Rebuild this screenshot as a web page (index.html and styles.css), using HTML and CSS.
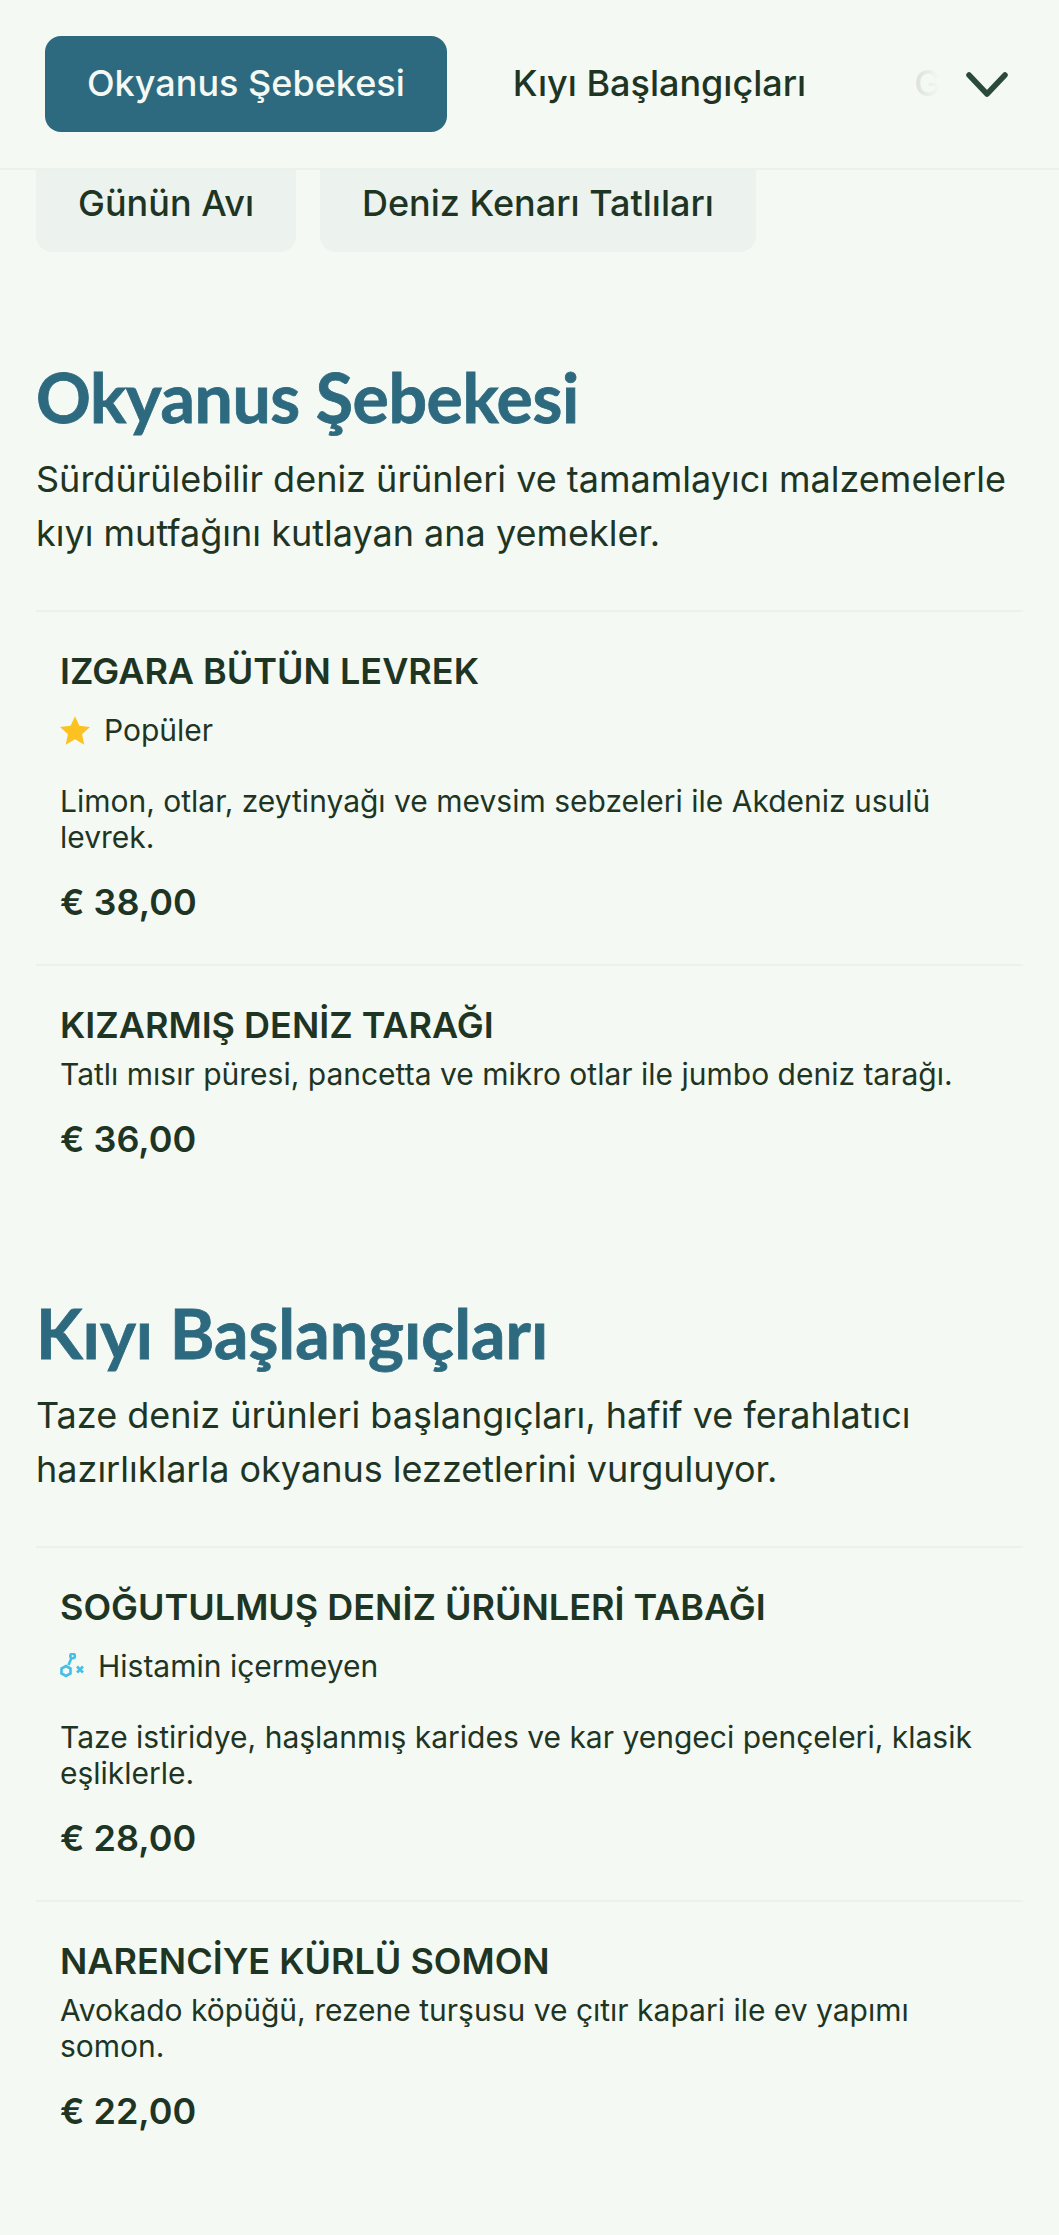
FILE: index.html
```html
<!DOCTYPE html>
<html lang="tr">
<head>
    <meta charset="UTF-8">
    <meta name="viewport" content="width=device-width, initial-scale=1.0">
    <title>Menü</title>
    <link rel="stylesheet" href="styles.css">
</head>
<body>
    <header class="topbar">
        <nav class="tabs">
            <a class="tab active">Okyanus Şebekesi</a>
            <a class="tab">Kıyı Başlangıçları</a>
            <a class="tab">Günün Avı</a>
        </nav>
        <div class="fade"></div>
        <svg class="chevron" viewBox="0 0 42 26" width="42" height="26">
            <path d="M3 3 L21 22 L39 3" fill="none" stroke="#2b4a3a" stroke-width="5.5" stroke-linecap="round" stroke-linejoin="round"/>
        </svg>
    </header>
    <div class="chips">
        <a class="chip">Günün Avı</a>
        <a class="chip">Deniz Kenarı Tatlıları</a>
    </div>

    <section class="section">
        <h2 class="title-main">Okyanus Şebekesi</h2>
        <p class="lead">Sürdürülebilir deniz ürünleri ve tamamlayıcı malzemelerle kıyı mutfağını kutlayan ana yemekler.</p>
        <div class="items">
            <article class="item">
                <h3>Izgara Bütün Levrek</h3>
                <div class="badge">
                    <svg viewBox="1 1.5 22 21" width="30" height="29"><path d="M12 1.5 L15.2 8.6 L23 9.5 L17.2 14.7 L18.8 22.4 L12 18.5 L5.2 22.4 L6.8 14.7 L1 9.5 L8.8 8.6 Z" fill="#fbc221"/></svg>
                    <span>Popüler</span>
                </div>
                <p class="desc">Limon, otlar, zeytinyağı ve mevsim sebzeleri ile Akdeniz usulü levrek.</p>
                <div class="price">€ 38,00</div>
            </article>
            <article class="item">
                <h3>Kızarmış Deniz Tarağı</h3>
                <p class="desc">Tatlı mısır püresi, pancetta ve mikro otlar ile jumbo deniz tarağı.</p>
                <div class="price">€ 36,00</div>
            </article>
        </div>
    </section>

    <section class="section">
        <h2>Kıyı Başlangıçları</h2>
        <p class="lead">Taze deniz ürünleri başlangıçları, hafif ve ferahlatıcı hazırlıklarla okyanus lezzetlerini vurguluyor.</p>
        <div class="items">
            <article class="item">
                <h3>Soğutulmuş Deniz Ürünleri Tabağı</h3>
                <div class="badge">
                    <svg viewBox="0 0 24 26" width="24" height="26" fill="none" stroke="#45bfe6" stroke-width="2.6">
                        <circle cx="12.6" cy="3" r="2.3"/>
                        <path d="M11.5 5 L8.5 12"/>
                        <path d="M6 13 L10.5 15.5 L10.5 20.5 L6 23 L1.5 20.5 L1.5 15.5 Z"/>
                        <path d="M17 13.5 L23 19.5 M23 13.5 L17 19.5"/>
                    </svg>
                    <span>Histamin içermeyen</span>
                </div>
                <p class="desc">Taze istiridye, haşlanmış karides ve kar yengeci pençeleri, klasik eşliklerle.</p>
                <div class="price">€ 28,00</div>
            </article>
            <article class="item">
                <h3>Narenciye Kürlü Somon</h3>
                <p class="desc">Avokado köpüğü, rezene turşusu ve çıtır kapari ile ev yapımı somon.</p>
                <div class="price">€ 22,00</div>
            </article>
        </div>
    </section>
</body>
</html>
```

FILE: styles.css
```css
*{
    margin: 0;
    padding: 0;
    box-sizing: border-box;
}
body{
    width: 1059px;
    height: 2235px;
    overflow: hidden;
    background-color: #f4f9f4;
    color: #1f3524;
    font-family: "Inter", "Liberation Sans", sans-serif;
}
.topbar{
    position: relative;
    z-index: 2;
    display: flex;
    align-items: center;
    height: 170px;
    padding: 0 45px;
    background-color: #f4f9f4;
    border-bottom: 2px solid #ecf1ec;
}
.tabs{
    display: flex;
    gap: 24px;
    width: 900px;
    overflow: hidden;
}
.tab{
    flex: none;
    height: 96px;
    line-height: 94px;
    padding: 0 42px;
    border-radius: 16px;
    font-size: 36px;
    font-weight: 500;
    white-space: nowrap;
}
.tab.active{
    background-color: #2e6a7f;
    color: #f4f9f4;
}
.fade{
    position: absolute;
    left: 900px;
    top: 0;
    width: 159px;
    height: 160px;
    background: linear-gradient(to right, rgba(244,249,244,0.8), #f4f9f4 25%);
}
.chevron{
    position: absolute;
    left: 966px;
    top: 72px;
}
.chips{
    display: flex;
    gap: 24px;
    margin-top: -14px;
    padding: 0 36px;
}
.chip{
    height: 96px;
    line-height: 94px;
    padding: 0 42px;
    border-radius: 16px;
    background-color: #ecf3ef;
    font-size: 36px;
    font-weight: 500;
    white-space: nowrap;
}
.section{
    padding: 0 36px;
    margin-top: 104px;
}
.section + .section{
    margin-top: 91px;
}
h2{
    font-family: "Lato", "Liberation Sans", sans-serif;
    font-size: 68px;
    font-weight: 700;
    line-height: 82px;
    color: #2e6a7f;
    -webkit-text-stroke: 0.8px #2e6a7f;
}
.title-main{
    letter-spacing: -0.45px;
}
.lead{
    margin-top: 14px;
    font-size: 36px;
    line-height: 54px;
}
.items{
    margin-top: 50px;
}
.item{
    padding: 37px 24px 40px;
    border-top: 2px solid #ecf1ec;
}
h3{
    margin-bottom: 9px;
    font-size: 36px;
    font-weight: 600;
    line-height: 44px;
    text-transform: uppercase;
}
.badge{
    display: flex;
    align-items: center;
    gap: 14px;
    margin-top: 15px;
    height: 44px;
    font-size: 30px;
}
.desc{
    font-size: 30px;
    line-height: 36px;
}
.badge + .desc{
    margin-top: 31px;
}
.price{
    margin-top: 25px;
    font-size: 36px;
    font-weight: 600;
    line-height: 44px;
}
```
